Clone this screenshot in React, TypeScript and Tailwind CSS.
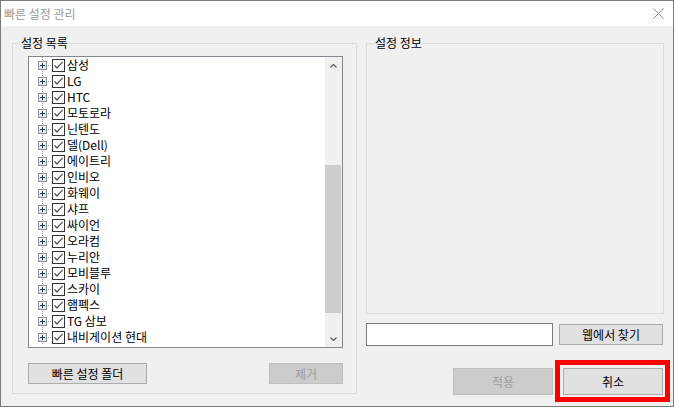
import React from "react";

const items = [
  "삼성",
  "LG",
  "HTC",
  "모토로라",
  "닌텐도",
  "델(Dell)",
  "에이트리",
  "인비오",
  "화웨이",
  "샤프",
  "싸이언",
  "오라컴",
  "누리안",
  "모비블루",
  "스카이",
  "햄펙스",
  "TG 삼보",
  "내비게이션 현대",
];

function Expander() {
  return (
    <svg width="23" height="16" viewBox="0 0 23 16" shapeRendering="crispEdges" className="shrink-0">
      <line x1="13.5" y1="0" x2="13.5" y2="16" stroke="#a0a0a0" strokeDasharray="1 1" />
      <line x1="19" y1="8.5" x2="23" y2="8.5" stroke="#a0a0a0" strokeDasharray="1 1" />
      <defs>
        <linearGradient id="pb" x1="0" y1="0" x2="0" y2="1">
          <stop offset="0" stopColor="#ffffff" />
          <stop offset="1" stopColor="#dcdcdc" />
        </linearGradient>
      </defs>
      <rect x="9.5" y="4.5" width="8" height="8" fill="url(#pb)" stroke="#919191" />
      <line x1="11" y1="8.5" x2="16" y2="8.5" stroke="#1f3a63" />
      <line x1="13.5" y1="6" x2="13.5" y2="11" stroke="#1f3a63" />
    </svg>
  );
}

function Check() {
  return (
    <svg width="13" height="13" viewBox="0 0 13 13" className="shrink-0">
      <rect x="0.5" y="0.5" width="12" height="12" fill="#fff" stroke="#333333" />
      <path d="M2.5 6.5 L5 9 L10.5 3.2" fill="none" stroke="#444444" strokeWidth="1.2" />
    </svg>
  );
}

function Btn({ label, w, h, off }: { label: string; w: string; h: string; off?: boolean }) {
  return (
    <div
      className={
        off
          ? `${w} ${h} flex items-center justify-center border border-[#bfbfbf] bg-[#cccccc] text-[#9d9d9d]`
          : `${w} ${h} flex items-center justify-center border border-[#adadad] bg-[#e1e1e1] text-black`
      }
    >
      {label}
    </div>
  );
}

export default function App() {
  return (
    <div className="flex h-[407px] w-[674px] flex-col border border-[#7a7a7a] bg-[#f0f0f0] font-['Noto_Sans_CJK_KR',sans-serif] text-[12px] leading-none text-black">
      {/* title bar */}
      <div className="flex h-[25px] items-center justify-between bg-white pl-[3px] pr-[9px]">
        <span className="text-[#9a9a9a]">빠른 설정 관리</span>
        <svg width="11" height="11" viewBox="0 0 11 11">
          <path d="M0.5 0.5 L10.5 10.5 M10.5 0.5 L0.5 10.5" stroke="#8a8a8a" strokeWidth="1" />
        </svg>
      </div>

      {/* body */}
      <div className="flex flex-1 gap-[9px] pl-[11px] pr-[9px] pt-[9px]">
        {/* left group */}
        <fieldset className="h-[359px] w-[345px] border border-[#dcdcdc]">
          <legend className="ml-[7px] px-[1px] leading-[16px]">설정 목록</legend>
          <div className="ml-[15px] mt-[5px] flex h-[292px] w-[315px] border border-[#828790] bg-white">
            <div className="flex-1 overflow-hidden">
              {items.map((t) => (
                <div key={t} className="flex h-[16px] items-center">
                  <Expander />
                  <Check />
                  <span className="ml-[2px] whitespace-nowrap">{t}</span>
                </div>
              ))}
            </div>
            <div className="flex w-[17px] flex-col bg-[#f0f0f0]">
              <div className="flex h-[17px] items-center justify-center">
                <svg width="7" height="4" viewBox="0 0 7 4">
                  <path d="M0.5 3.5 L3.5 0.5 L6.5 3.5" fill="none" stroke="#606060" strokeWidth="1.3" />
                </svg>
              </div>
              <div className="flex-1">
                <div className="mr-[1px] mt-[91px] h-[148px] bg-[#cdcdcd]" />
              </div>
              <div className="flex h-[17px] items-center justify-center">
                <svg width="7" height="4" viewBox="0 0 7 4">
                  <path d="M0.5 0.5 L3.5 3.5 L6.5 0.5" fill="none" stroke="#606060" strokeWidth="1.3" />
                </svg>
              </div>
            </div>
          </div>
          <div className="ml-[15px] mt-[15px] flex w-[315px] justify-between">
            <Btn label="빠른 설정 폴더" w="w-[119px]" h="h-[21px]" />
            <Btn label="제거" w="w-[74px]" h="h-[21px]" off />
          </div>
        </fieldset>

        {/* right column */}
        <div className="flex w-[298px] flex-col">
          <fieldset className="h-[279px] w-[298px] border border-[#dcdcdc]">
            <legend className="ml-[7px] px-[1px] leading-[16px]">설정 정보</legend>
          </fieldset>
          <div className="mt-[9px] flex items-center gap-[6px]">
            <div className="h-[23px] w-[187px] border border-[#7a7a7a] bg-white" />
            <Btn label="웹에서 찾기" w="w-[104px]" h="h-[21px]" />
          </div>
          <div className="mt-[22px] flex justify-end gap-[10px] pr-[1px]">
            <Btn label="적용" w="w-[100px]" h="h-[27px]" off />
            <div className="relative">
              <Btn label="취소" w="w-[100px]" h="h-[27px]" />
              <div className="pointer-events-none absolute -bottom-[7px] -left-[8px] -right-[7px] -top-[8px] border-[5px] border-[#ff0000]" />
            </div>
          </div>
        </div>
      </div>
    </div>
  );
}
